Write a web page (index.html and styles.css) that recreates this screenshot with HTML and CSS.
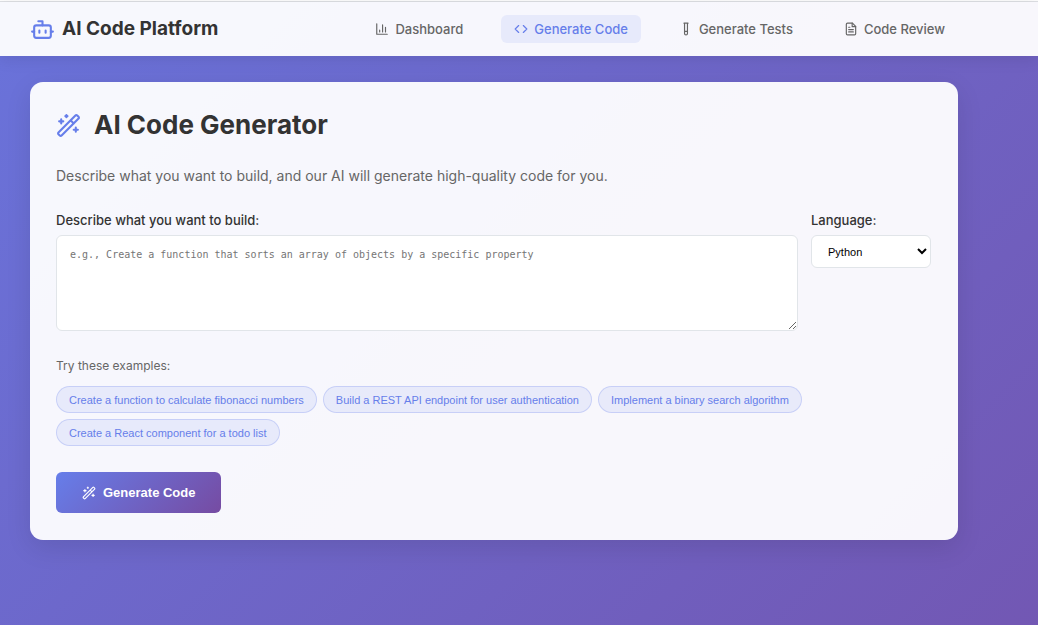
FILE: index.html
```html
<!DOCTYPE html>
<html lang="en">
<head>
<meta charset="utf-8">
<meta name="viewport" content="width=device-width, initial-scale=1">
<title>AI Code Platform</title>
<link rel="stylesheet" href="styles.css">
</head>
<body>
<div class="topline"></div>
<header class="header">
  <div class="brand">
    <svg class="icon icon-lg" viewBox="0 0 24 24"><path d="M12 8V4H8"/><rect x="4" y="8" width="16" height="12" rx="2"/><path d="M2 14h2M20 14h2M15 13v2M9 13v2"/></svg>
    <span>AI Code Platform</span>
  </div>
  <nav class="nav">
    <a class="nav-link" href="#dashboard">
      <svg class="icon" viewBox="0 0 24 24"><path d="M3 3v18h18M18 17V9M13 17V5M8 17v-3"/></svg>
      Dashboard</a>
    <a class="nav-link active" href="#generate" aria-current="page">
      <svg class="icon" viewBox="0 0 24 24"><path d="m16 18 6-6-6-6M8 6l-6 6 6 6"/></svg>
      Generate Code</a>
    <a class="nav-link" href="#tests">
      <svg class="icon" viewBox="0 0 24 24"><path d="M14.5 2v17.5a2.5 2.5 0 0 1-5 0V2M8.5 2h7M14.5 16h-5"/></svg>
      Generate Tests</a>
    <a class="nav-link" href="#review">
      <svg class="icon" viewBox="0 0 24 24"><path d="M14.5 2H6a2 2 0 0 0-2 2v16a2 2 0 0 0 2 2h12a2 2 0 0 0 2-2V7.5L14.5 2z"/><path d="M14 2v6h6M16 13H8M16 17H8M10 9H8"/></svg>
      Code Review</a>
  </nav>
</header>
<main class="main">
  <section class="card">
    <h1 class="title">
      <svg class="icon icon-lg" viewBox="0 0 24 24"><path d="m21.64 3.64-1.28-1.28a1.21 1.21 0 0 0-1.72 0L2.36 18.64a1.21 1.21 0 0 0 0 1.72l1.28 1.28a1.2 1.2 0 0 0 1.72 0L21.64 5.36a1.2 1.2 0 0 0 0-1.72M14 7l3 3M5 6v4M19 14v4M10 2v2M7 8H3M21 16h-4M11 3H9"/></svg>
      AI Code Generator</h1>
    <p class="subtitle">Describe what you want to build, and our AI will generate high-quality code for you.</p>
    <form class="form">
      <div class="row">
        <div class="field field-wide">
          <label for="prompt">Describe what you want to build:</label>
          <textarea id="prompt" class="prompt" placeholder="e.g., Create a function that sorts an array of objects by a specific property"></textarea>
        </div>
        <div class="field field-narrow">
          <label for="language">Language:</label>
          <select id="language" class="language"><option>Python</option><option>JavaScript</option></select>
        </div>
      </div>
      <div class="examples">
        <p class="hint">Try these examples:</p>
        <div class="chips">
          <button type="button" class="chip">Create a function to calculate fibonacci numbers</button>
          <button type="button" class="chip">Build a REST API endpoint for user authentication</button>
          <button type="button" class="chip">Implement a binary search algorithm</button>
          <button type="button" class="chip">Create a React component for a todo list</button>
        </div>
      </div>
      <button type="button" class="submit">
        <svg class="icon" viewBox="0 0 24 24"><path d="m21.64 3.64-1.28-1.28a1.21 1.21 0 0 0-1.72 0L2.36 18.64a1.21 1.21 0 0 0 0 1.72l1.28 1.28a1.2 1.2 0 0 0 1.72 0L21.64 5.36a1.2 1.2 0 0 0 0-1.72M14 7l3 3M5 6v4M19 14v4M10 2v2M7 8H3M21 16h-4M11 3H9"/></svg>
        Generate Code</button>
    </form>
  </section>
</main>
</body>
</html>
```
FILE: styles.css
```css
* { box-sizing: border-box; }

body {
  margin: 0;
  min-height: 100vh;
  font-family: Inter, "Liberation Sans", sans-serif;
  font-size: 13px;
  color: #333;
  background: linear-gradient(135deg, #667eea -40%, #764ba2 145%) no-repeat;
}

.icon {
  width: 14px;
  height: 14px;
  flex: none;
  fill: none;
  stroke: currentColor;
  stroke-width: 2;
  stroke-linecap: round;
  stroke-linejoin: round;
}

.icon-lg {
  width: 25px;
  height: 25px;
  color: #667eea;
}

.topline {
  height: 2px;
  border-bottom: 1px solid #dfe1e5;
  background: #fff;
}

.header {
  display: flex;
  align-items: center;
  justify-content: space-between;
  padding: 13px 80px 13px 30px;
  background: rgba(255, 255, 255, 0.95);
  box-shadow: 0 2px 16px rgba(0, 0, 0, 0.1);
}

.brand {
  display: flex;
  align-items: center;
  gap: 7px;
  font-size: 19px;
  font-weight: 700;
  line-height: 28px;
}

.nav {
  display: flex;
  gap: 25px;
}

.nav-link {
  display: flex;
  align-items: center;
  gap: 6px;
  padding: 4px 13px;
  border-radius: 6px;
  color: #666;
  font-weight: 500;
  line-height: 20px;
  text-decoration: none;
}

.nav-link.active {
  color: #667eea;
  background: rgba(102, 126, 234, 0.1);
}

.main {
  padding: 26px 80px 26px 30px;
}

.card {
  padding: 26px 27px 27px 26px;
  border-radius: 13px;
  background: rgba(255, 255, 255, 0.95);
  box-shadow: 0 8px 26px rgba(0, 0, 0, 0.1);
}

.title {
  display: flex;
  align-items: center;
  gap: 13px;
  margin: 0 0 26px;
  font-size: 26px;
  font-weight: 700;
  line-height: 34px;
}

.subtitle {
  margin: 0 0 27px;
  color: #666;
  font-size: 14px;
  line-height: 16px;
}

.form {
  display: flex;
  flex-direction: column;
  align-items: flex-start;
  gap: 26px;
}

.row {
  display: flex;
  gap: 13px;
  width: 100%;
}

.field {
  display: flex;
  flex-direction: column;
  align-items: flex-start;
  gap: 5px;
  font-weight: 500;
  line-height: 19px;
}

.field-wide { flex: 1; }

.field-narrow { width: 120px; }

.prompt {
  width: 100%;
  height: 96px;
  padding: 13px;
  border: 1px solid #e1e5e9;
  border-radius: 6px;
  background: #fff;
  font-family: "DejaVu Sans Mono", "Liberation Mono", monospace;
  font-size: 10px;
  resize: vertical;
}

.language {
  width: 100%;
  height: 33px;
  padding: 0 12px;
  border: 1px solid #e1e5e9;
  border-radius: 6px;
  background: #fff;
  color: #000;
  font-family: "Liberation Sans", Arial, sans-serif;
  font-size: 11px;
}

.hint {
  margin: 0 0 12px;
  padding-top: 1px;
  color: #666;
  font-size: 12px;
  line-height: 16px;
}

.chips {
  display: flex;
  flex-wrap: wrap;
  gap: 6px;
}

.chip {
  height: 27px;
  padding: 0 12px;
  border: 1px solid rgba(102, 126, 234, 0.25);
  border-radius: 14px;
  background: rgba(102, 126, 234, 0.1);
  color: #667eea;
  font-family: "Liberation Sans", Arial, sans-serif;
  font-size: 11px;
}

.submit {
  display: flex;
  align-items: center;
  gap: 7px;
  height: 41px;
  padding: 0 26px;
  border: 0;
  border-radius: 6px;
  background: linear-gradient(135deg, #667eea, #764ba2);
  color: #fff;
  font-family: "Liberation Sans", Arial, sans-serif;
  font-size: 13px;
  font-weight: 700;
}
```
